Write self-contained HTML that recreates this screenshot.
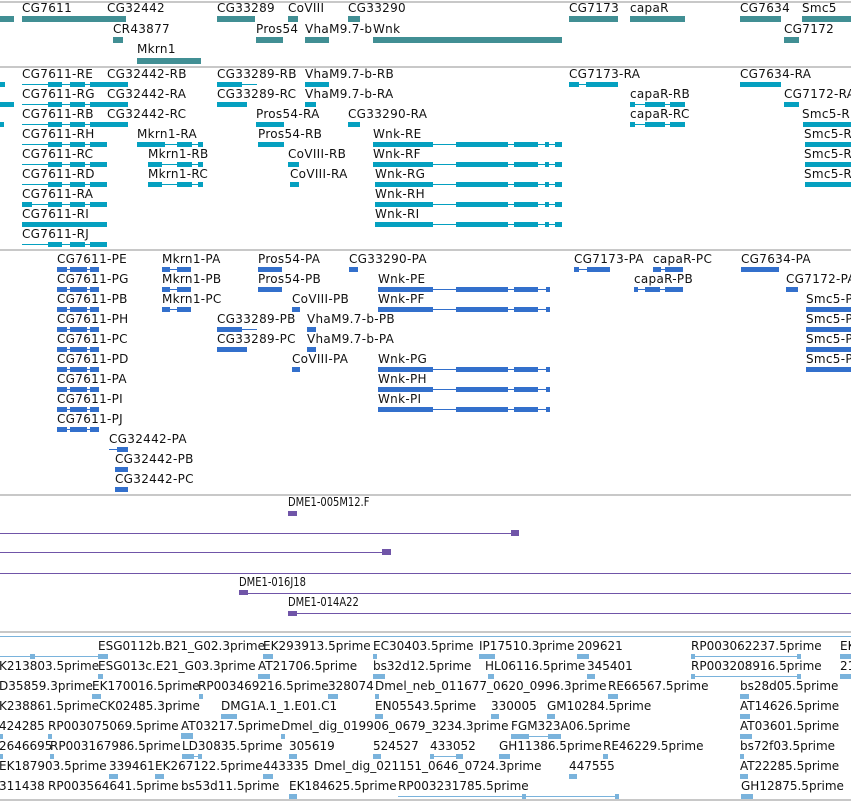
<!DOCTYPE html>
<html><head><meta charset="utf-8">
<style>
body{margin:0;width:851px;height:802px;overflow:hidden;background:#fff;position:relative;font-family:"DejaVu Sans","Liberation Sans",sans-serif}
.t{position:absolute;font-size:12px;line-height:14px;white-space:nowrap;color:#111;letter-spacing:0.3px}
.z .t{letter-spacing:0}
.n{position:absolute;font-family:"DejaVu Sans Condensed","Liberation Sans Narrow","Liberation Sans",sans-serif;font-size:12px;line-height:14px;color:#111;white-space:nowrap;transform:scaleX(0.92);transform-origin:left}
.b{position:absolute}
.s{position:absolute;left:0;width:851px;height:2px;background:#c8c8c8}
.a{background:#418f94}.c{background:#05a0c0}.d{background:#3370cc}.p{background:#7055a8}.e{background:#7ab3dc}
</style></head><body>
<div class="s" style="top:1px"></div>
<div class="s" style="top:66px"></div>
<div class="s" style="top:249px"></div>
<div class="s" style="top:494px"></div>
<div class="s" style="top:631px"></div>
<div class="b e" style="left:0;top:636px;width:851px;height:1px"></div>
<div class="s" style="top:799px"></div>

<!-- Track 1 -->
<div class="t" style="left:22px;top:1px">CG7611</div>
<div class="t" style="left:107px;top:1px">CG32442</div>
<div class="t" style="left:217px;top:1px">CG33289</div>
<div class="t" style="left:288px;top:1px">CoVIII</div>
<div class="t" style="left:348px;top:1px">CG33290</div>
<div class="t" style="left:569px;top:1px">CG7173</div>
<div class="t" style="left:630px;top:1px">capaR</div>
<div class="t" style="left:740px;top:1px">CG7634</div>
<div class="t" style="left:802px;top:1px">Smc5</div>
<div class="b a" style="left:0;top:16px;width:14px;height:6px"></div>
<div class="b a" style="left:22px;top:16px;width:85px;height:6px"></div>
<div class="b a" style="left:107px;top:16px;width:19px;height:6px"></div>
<div class="b a" style="left:217px;top:16px;width:38px;height:6px"></div>
<div class="b a" style="left:288px;top:16px;width:10px;height:6px"></div>
<div class="b a" style="left:348px;top:16px;width:12px;height:6px"></div>
<div class="b a" style="left:569px;top:16px;width:49px;height:6px"></div>
<div class="b a" style="left:630px;top:16px;width:55px;height:6px"></div>
<div class="b a" style="left:740px;top:16px;width:41px;height:6px"></div>
<div class="b a" style="left:802px;top:16px;width:49px;height:6px"></div>
<div class="t" style="left:113px;top:22px">CR43877</div>
<div class="t" style="left:256px;top:22px">Pros54</div>
<div class="t" style="left:305px;top:22px">VhaM9.7-b</div>
<div class="t" style="left:373px;top:22px">Wnk</div>
<div class="t" style="left:784px;top:22px">CG7172</div>
<div class="b a" style="left:113px;top:37px;width:10px;height:6px"></div>
<div class="b a" style="left:256px;top:37px;width:27px;height:6px"></div>
<div class="b a" style="left:305px;top:37px;width:24px;height:6px"></div>
<div class="b a" style="left:373px;top:37px;width:189px;height:6px"></div>
<div class="b a" style="left:784px;top:37px;width:15px;height:6px"></div>
<div class="t" style="left:137px;top:42px">Mkrn1</div>
<div class="b a" style="left:137px;top:58px;width:64px;height:6px"></div>

<!-- Track 2 -->
<div class="t" style="left:22px;top:67px">CG7611-RE</div>
<div class="t" style="left:107px;top:67px">CG32442-RB</div>
<div class="t" style="left:217px;top:67px">CG33289-RB</div>
<div class="t" style="left:305px;top:67px">VhaM9.7-b-RB</div>
<div class="t" style="left:569px;top:67px">CG7173-RA</div>
<div class="t" style="left:740px;top:67px">CG7634-RA</div>
<div class="t" style="left:22px;top:87px">CG7611-RG</div>
<div class="t" style="left:107px;top:87px">CG32442-RA</div>
<div class="t" style="left:217px;top:87px">CG33289-RC</div>
<div class="t" style="left:305px;top:87px">VhaM9.7-b-RA</div>
<div class="t" style="left:630px;top:87px">capaR-RB</div>
<div class="t" style="left:784px;top:87px">CG7172-RA</div>
<div class="t" style="left:22px;top:107px">CG7611-RB</div>
<div class="t" style="left:107px;top:107px">CG32442-RC</div>
<div class="t" style="left:256px;top:107px">Pros54-RA</div>
<div class="t" style="left:348px;top:107px">CG33290-RA</div>
<div class="t" style="left:630px;top:107px">capaR-RC</div>
<div class="t" style="left:802px;top:107px">Smc5-RB</div>
<div class="t" style="left:22px;top:127px">CG7611-RH</div>
<div class="t" style="left:137px;top:127px">Mkrn1-RA</div>
<div class="t" style="left:258px;top:127px">Pros54-RB</div>
<div class="t" style="left:373px;top:127px">Wnk-RE</div>
<div class="t" style="left:804px;top:127px">Smc5-RC</div>
<div class="t" style="left:22px;top:147px">CG7611-RC</div>
<div class="t" style="left:148px;top:147px">Mkrn1-RB</div>
<div class="t" style="left:288px;top:147px">CoVIII-RB</div>
<div class="t" style="left:373px;top:147px">Wnk-RF</div>
<div class="t" style="left:804px;top:147px">Smc5-RD</div>
<div class="t" style="left:22px;top:167px">CG7611-RD</div>
<div class="t" style="left:148px;top:167px">Mkrn1-RC</div>
<div class="t" style="left:290px;top:167px">CoVIII-RA</div>
<div class="t" style="left:375px;top:167px">Wnk-RG</div>
<div class="t" style="left:804px;top:167px">Smc5-RA</div>
<div class="t" style="left:22px;top:187px">CG7611-RA</div>
<div class="t" style="left:375px;top:187px">Wnk-RH</div>
<div class="t" style="left:22px;top:207px">CG7611-RI</div>
<div class="t" style="left:375px;top:207px">Wnk-RI</div>
<div class="t" style="left:22px;top:227px">CG7611-RJ</div>

<div class="b c" style="left:22px;top:84px;width:85px;height:1px"></div><div class="b c" style="left:48px;top:82px;width:14px;height:5px"></div><div class="b c" style="left:70px;top:82px;width:15px;height:5px"></div><div class="b c" style="left:90px;top:82px;width:17px;height:5px"></div>
<div class="b c" style="left:22px;top:104px;width:85px;height:1px"></div><div class="b c" style="left:48px;top:102px;width:14px;height:5px"></div><div class="b c" style="left:70px;top:102px;width:15px;height:5px"></div><div class="b c" style="left:90px;top:102px;width:17px;height:5px"></div>
<div class="b c" style="left:22px;top:124px;width:85px;height:1px"></div><div class="b c" style="left:48px;top:122px;width:14px;height:5px"></div><div class="b c" style="left:70px;top:122px;width:15px;height:5px"></div><div class="b c" style="left:90px;top:122px;width:17px;height:5px"></div>
<div class="b c" style="left:22px;top:144px;width:85px;height:1px"></div><div class="b c" style="left:48px;top:142px;width:14px;height:5px"></div><div class="b c" style="left:70px;top:142px;width:15px;height:5px"></div><div class="b c" style="left:90px;top:142px;width:17px;height:5px"></div>
<div class="b c" style="left:22px;top:164px;width:85px;height:1px"></div><div class="b c" style="left:48px;top:162px;width:14px;height:5px"></div><div class="b c" style="left:70px;top:162px;width:15px;height:5px"></div><div class="b c" style="left:90px;top:162px;width:17px;height:5px"></div>
<div class="b c" style="left:22px;top:184px;width:85px;height:1px"></div><div class="b c" style="left:48px;top:182px;width:14px;height:5px"></div><div class="b c" style="left:70px;top:182px;width:15px;height:5px"></div><div class="b c" style="left:90px;top:182px;width:17px;height:5px"></div>
<div class="b c" style="left:22px;top:204px;width:85px;height:1px"></div><div class="b c" style="left:22px;top:202px;width:10px;height:5px"></div><div class="b c" style="left:48px;top:202px;width:14px;height:5px"></div><div class="b c" style="left:70px;top:202px;width:15px;height:5px"></div><div class="b c" style="left:90px;top:202px;width:17px;height:5px"></div>
<div class="b c" style="left:22px;top:222px;width:70px;height:5px"></div><div class="b c" style="left:90px;top:222px;width:17px;height:5px"></div>
<div class="b c" style="left:22px;top:244px;width:85px;height:1px"></div><div class="b c" style="left:48px;top:242px;width:14px;height:5px"></div><div class="b c" style="left:70px;top:242px;width:15px;height:5px"></div><div class="b c" style="left:90px;top:242px;width:17px;height:5px"></div>
<div class="b c" style="left:0;top:82px;width:5px;height:5px"></div>
<div class="b c" style="left:0;top:102px;width:14px;height:5px"></div>
<div class="b c" style="left:0;top:122px;width:4px;height:5px"></div>
<div class="b c" style="left:107px;top:82px;width:21px;height:5px"></div>
<div class="b c" style="left:107px;top:102px;width:21px;height:5px"></div>
<div class="b c" style="left:107px;top:122px;width:21px;height:5px"></div>
<div class="b c" style="left:217px;top:84px;width:40px;height:1px"></div><div class="b c" style="left:217px;top:82px;width:25px;height:5px"></div>
<div class="b c" style="left:217px;top:102px;width:30px;height:5px"></div>
<div class="b c" style="left:305px;top:82px;width:24px;height:5px"></div>
<div class="b c" style="left:305px;top:102px;width:11px;height:5px"></div>
<div class="b c" style="left:256px;top:122px;width:28px;height:5px"></div>
<div class="b c" style="left:258px;top:142px;width:26px;height:5px"></div>
<div class="b c" style="left:348px;top:122px;width:12px;height:5px"></div>
<div class="b c" style="left:137px;top:144px;width:66px;height:1px"></div><div class="b c" style="left:137px;top:142px;width:28px;height:5px"></div><div class="b c" style="left:177px;top:142px;width:15px;height:5px"></div><div class="b c" style="left:198px;top:142px;width:5px;height:5px"></div>
<div class="b c" style="left:148px;top:164px;width:55px;height:1px"></div><div class="b c" style="left:148px;top:162px;width:14px;height:5px"></div><div class="b c" style="left:177px;top:162px;width:15px;height:5px"></div><div class="b c" style="left:198px;top:162px;width:5px;height:5px"></div>
<div class="b c" style="left:148px;top:184px;width:55px;height:1px"></div><div class="b c" style="left:148px;top:182px;width:14px;height:5px"></div><div class="b c" style="left:177px;top:182px;width:15px;height:5px"></div><div class="b c" style="left:198px;top:182px;width:5px;height:5px"></div>
<div class="b c" style="left:288px;top:162px;width:11px;height:5px"></div>
<div class="b c" style="left:290px;top:182px;width:9px;height:5px"></div>
<div class="b c" style="left:373px;top:144px;width:189px;height:1px"></div><div class="b c" style="left:373px;top:142px;width:60px;height:5px"></div><div class="b c" style="left:456px;top:142px;width:52px;height:5px"></div><div class="b c" style="left:514px;top:142px;width:24px;height:5px"></div><div class="b c" style="left:545px;top:142px;width:4px;height:5px"></div><div class="b c" style="left:555px;top:142px;width:7px;height:5px"></div>
<div class="b c" style="left:373px;top:164px;width:189px;height:1px"></div><div class="b c" style="left:373px;top:162px;width:60px;height:5px"></div><div class="b c" style="left:456px;top:162px;width:52px;height:5px"></div><div class="b c" style="left:514px;top:162px;width:24px;height:5px"></div><div class="b c" style="left:545px;top:162px;width:4px;height:5px"></div><div class="b c" style="left:555px;top:162px;width:7px;height:5px"></div>
<div class="b c" style="left:375px;top:184px;width:187px;height:1px"></div><div class="b c" style="left:375px;top:182px;width:58px;height:5px"></div><div class="b c" style="left:456px;top:182px;width:52px;height:5px"></div><div class="b c" style="left:514px;top:182px;width:24px;height:5px"></div><div class="b c" style="left:545px;top:182px;width:4px;height:5px"></div><div class="b c" style="left:555px;top:182px;width:7px;height:5px"></div>
<div class="b c" style="left:375px;top:204px;width:187px;height:1px"></div><div class="b c" style="left:375px;top:202px;width:58px;height:5px"></div><div class="b c" style="left:456px;top:202px;width:52px;height:5px"></div><div class="b c" style="left:514px;top:202px;width:24px;height:5px"></div><div class="b c" style="left:545px;top:202px;width:4px;height:5px"></div><div class="b c" style="left:555px;top:202px;width:7px;height:5px"></div>
<div class="b c" style="left:375px;top:224px;width:187px;height:1px"></div><div class="b c" style="left:375px;top:222px;width:58px;height:5px"></div><div class="b c" style="left:456px;top:222px;width:52px;height:5px"></div><div class="b c" style="left:514px;top:222px;width:24px;height:5px"></div><div class="b c" style="left:545px;top:222px;width:4px;height:5px"></div><div class="b c" style="left:555px;top:222px;width:7px;height:5px"></div>
<div class="b c" style="left:569px;top:84px;width:49px;height:1px"></div><div class="b c" style="left:569px;top:82px;width:10px;height:5px"></div><div class="b c" style="left:586px;top:82px;width:32px;height:5px"></div>
<div class="b c" style="left:630px;top:104px;width:55px;height:1px"></div><div class="b c" style="left:630px;top:102px;width:5px;height:5px"></div><div class="b c" style="left:645px;top:102px;width:20px;height:5px"></div><div class="b c" style="left:670px;top:102px;width:15px;height:5px"></div>
<div class="b c" style="left:630px;top:124px;width:55px;height:1px"></div><div class="b c" style="left:630px;top:122px;width:5px;height:5px"></div><div class="b c" style="left:645px;top:122px;width:20px;height:5px"></div><div class="b c" style="left:670px;top:122px;width:15px;height:5px"></div>
<div class="b c" style="left:740px;top:82px;width:41px;height:5px"></div>
<div class="b c" style="left:784px;top:102px;width:15px;height:5px"></div>
<div class="b c" style="left:803px;top:122px;width:48px;height:5px"></div>
<div class="b c" style="left:805px;top:142px;width:46px;height:5px"></div>
<div class="b c" style="left:805px;top:162px;width:46px;height:5px"></div>
<div class="b c" style="left:805px;top:182px;width:46px;height:5px"></div>

<!-- Track 3 -->
<div class="t" style="left:57px;top:252px">CG7611-PE</div>
<div class="t" style="left:162px;top:252px">Mkrn1-PA</div>
<div class="t" style="left:258px;top:252px">Pros54-PA</div>
<div class="t" style="left:349px;top:252px">CG33290-PA</div>
<div class="t" style="left:574px;top:252px">CG7173-PA</div>
<div class="t" style="left:653px;top:252px">capaR-PC</div>
<div class="t" style="left:741px;top:252px">CG7634-PA</div>
<div class="t" style="left:57px;top:272px">CG7611-PG</div>
<div class="t" style="left:162px;top:272px">Mkrn1-PB</div>
<div class="t" style="left:258px;top:272px">Pros54-PB</div>
<div class="t" style="left:378px;top:272px">Wnk-PE</div>
<div class="t" style="left:634px;top:272px">capaR-PB</div>
<div class="t" style="left:786px;top:272px">CG7172-PA</div>
<div class="t" style="left:57px;top:292px">CG7611-PB</div>
<div class="t" style="left:162px;top:292px">Mkrn1-PC</div>
<div class="t" style="left:292px;top:292px">CoVIII-PB</div>
<div class="t" style="left:378px;top:292px">Wnk-PF</div>
<div class="t" style="left:806px;top:292px">Smc5-PA</div>
<div class="t" style="left:57px;top:312px">CG7611-PH</div>
<div class="t" style="left:217px;top:312px">CG33289-PB</div>
<div class="t" style="left:307px;top:312px">VhaM9.7-b-PB</div>
<div class="t" style="left:806px;top:312px">Smc5-PB</div>
<div class="t" style="left:57px;top:332px">CG7611-PC</div>
<div class="t" style="left:217px;top:332px">CG33289-PC</div>
<div class="t" style="left:307px;top:332px">VhaM9.7-b-PA</div>
<div class="t" style="left:806px;top:332px">Smc5-PC</div>
<div class="t" style="left:57px;top:352px">CG7611-PD</div>
<div class="t" style="left:292px;top:352px">CoVIII-PA</div>
<div class="t" style="left:378px;top:352px">Wnk-PG</div>
<div class="t" style="left:806px;top:352px">Smc5-PD</div>
<div class="t" style="left:57px;top:372px">CG7611-PA</div>
<div class="t" style="left:378px;top:372px">Wnk-PH</div>
<div class="t" style="left:57px;top:392px">CG7611-PI</div>
<div class="t" style="left:378px;top:392px">Wnk-PI</div>
<div class="t" style="left:57px;top:412px">CG7611-PJ</div>
<div class="t" style="left:109px;top:432px">CG32442-PA</div>
<div class="t" style="left:115px;top:452px">CG32442-PB</div>
<div class="t" style="left:115px;top:472px">CG32442-PC</div>

<div class="b d" style="left:57px;top:269px;width:42px;height:1px"></div><div class="b d" style="left:57px;top:267px;width:10px;height:5px"></div><div class="b d" style="left:70px;top:267px;width:17px;height:5px"></div><div class="b d" style="left:90px;top:267px;width:9px;height:5px"></div>
<div class="b d" style="left:57px;top:289px;width:42px;height:1px"></div><div class="b d" style="left:57px;top:287px;width:10px;height:5px"></div><div class="b d" style="left:70px;top:287px;width:17px;height:5px"></div><div class="b d" style="left:90px;top:287px;width:9px;height:5px"></div>
<div class="b d" style="left:57px;top:309px;width:42px;height:1px"></div><div class="b d" style="left:57px;top:307px;width:10px;height:5px"></div><div class="b d" style="left:70px;top:307px;width:17px;height:5px"></div><div class="b d" style="left:90px;top:307px;width:9px;height:5px"></div>
<div class="b d" style="left:57px;top:329px;width:42px;height:1px"></div><div class="b d" style="left:57px;top:327px;width:10px;height:5px"></div><div class="b d" style="left:70px;top:327px;width:17px;height:5px"></div><div class="b d" style="left:90px;top:327px;width:9px;height:5px"></div>
<div class="b d" style="left:57px;top:349px;width:42px;height:1px"></div><div class="b d" style="left:57px;top:347px;width:10px;height:5px"></div><div class="b d" style="left:70px;top:347px;width:17px;height:5px"></div><div class="b d" style="left:90px;top:347px;width:9px;height:5px"></div>
<div class="b d" style="left:57px;top:369px;width:42px;height:1px"></div><div class="b d" style="left:57px;top:367px;width:10px;height:5px"></div><div class="b d" style="left:70px;top:367px;width:17px;height:5px"></div><div class="b d" style="left:90px;top:367px;width:9px;height:5px"></div>
<div class="b d" style="left:57px;top:389px;width:42px;height:1px"></div><div class="b d" style="left:57px;top:387px;width:10px;height:5px"></div><div class="b d" style="left:70px;top:387px;width:17px;height:5px"></div><div class="b d" style="left:90px;top:387px;width:9px;height:5px"></div>
<div class="b d" style="left:57px;top:409px;width:42px;height:1px"></div><div class="b d" style="left:57px;top:407px;width:10px;height:5px"></div><div class="b d" style="left:70px;top:407px;width:17px;height:5px"></div><div class="b d" style="left:90px;top:407px;width:9px;height:5px"></div>
<div class="b d" style="left:57px;top:429px;width:42px;height:1px"></div><div class="b d" style="left:57px;top:427px;width:10px;height:5px"></div><div class="b d" style="left:70px;top:427px;width:17px;height:5px"></div><div class="b d" style="left:90px;top:427px;width:9px;height:5px"></div>
<div class="b d" style="left:109px;top:449px;width:19px;height:1px"></div><div class="b d" style="left:117px;top:447px;width:11px;height:5px"></div>
<div class="b d" style="left:115px;top:467px;width:13px;height:5px"></div>
<div class="b d" style="left:115px;top:487px;width:13px;height:5px"></div>
<div class="b d" style="left:162px;top:269px;width:29px;height:1px"></div><div class="b d" style="left:162px;top:267px;width:8px;height:5px"></div><div class="b d" style="left:177px;top:267px;width:14px;height:5px"></div>
<div class="b d" style="left:162px;top:289px;width:29px;height:1px"></div><div class="b d" style="left:162px;top:287px;width:8px;height:5px"></div><div class="b d" style="left:177px;top:287px;width:14px;height:5px"></div>
<div class="b d" style="left:162px;top:309px;width:29px;height:1px"></div><div class="b d" style="left:162px;top:307px;width:8px;height:5px"></div><div class="b d" style="left:177px;top:307px;width:14px;height:5px"></div>
<div class="b d" style="left:258px;top:267px;width:24px;height:5px"></div>
<div class="b d" style="left:258px;top:287px;width:24px;height:5px"></div>
<div class="b d" style="left:349px;top:267px;width:9px;height:5px"></div>
<div class="b d" style="left:292px;top:307px;width:8px;height:5px"></div>
<div class="b d" style="left:292px;top:367px;width:8px;height:5px"></div>
<div class="b d" style="left:217px;top:329px;width:40px;height:1px"></div><div class="b d" style="left:217px;top:327px;width:25px;height:5px"></div>
<div class="b d" style="left:217px;top:347px;width:30px;height:5px"></div>
<div class="b d" style="left:307px;top:327px;width:9px;height:5px"></div>
<div class="b d" style="left:307px;top:347px;width:9px;height:5px"></div>
<div class="b d" style="left:378px;top:289px;width:172px;height:1px"></div><div class="b d" style="left:378px;top:287px;width:55px;height:5px"></div><div class="b d" style="left:456px;top:287px;width:52px;height:5px"></div><div class="b d" style="left:514px;top:287px;width:24px;height:5px"></div><div class="b d" style="left:546px;top:287px;width:4px;height:5px"></div>
<div class="b d" style="left:378px;top:309px;width:172px;height:1px"></div><div class="b d" style="left:378px;top:307px;width:55px;height:5px"></div><div class="b d" style="left:456px;top:307px;width:52px;height:5px"></div><div class="b d" style="left:514px;top:307px;width:24px;height:5px"></div><div class="b d" style="left:546px;top:307px;width:4px;height:5px"></div>
<div class="b d" style="left:378px;top:369px;width:172px;height:1px"></div><div class="b d" style="left:378px;top:367px;width:55px;height:5px"></div><div class="b d" style="left:456px;top:367px;width:52px;height:5px"></div><div class="b d" style="left:514px;top:367px;width:24px;height:5px"></div><div class="b d" style="left:546px;top:367px;width:4px;height:5px"></div>
<div class="b d" style="left:378px;top:389px;width:172px;height:1px"></div><div class="b d" style="left:378px;top:387px;width:55px;height:5px"></div><div class="b d" style="left:456px;top:387px;width:52px;height:5px"></div><div class="b d" style="left:514px;top:387px;width:24px;height:5px"></div><div class="b d" style="left:546px;top:387px;width:4px;height:5px"></div>
<div class="b d" style="left:378px;top:409px;width:172px;height:1px"></div><div class="b d" style="left:378px;top:407px;width:55px;height:5px"></div><div class="b d" style="left:456px;top:407px;width:52px;height:5px"></div><div class="b d" style="left:514px;top:407px;width:24px;height:5px"></div><div class="b d" style="left:546px;top:407px;width:4px;height:5px"></div>
<div class="b d" style="left:574px;top:269px;width:36px;height:1px"></div><div class="b d" style="left:574px;top:267px;width:5px;height:5px"></div><div class="b d" style="left:587px;top:267px;width:23px;height:5px"></div>
<div class="b d" style="left:653px;top:269px;width:30px;height:1px"></div><div class="b d" style="left:653px;top:267px;width:8px;height:5px"></div><div class="b d" style="left:665px;top:267px;width:18px;height:5px"></div>
<div class="b d" style="left:634px;top:289px;width:49px;height:1px"></div><div class="b d" style="left:634px;top:287px;width:4px;height:5px"></div><div class="b d" style="left:645px;top:287px;width:15px;height:5px"></div><div class="b d" style="left:665px;top:287px;width:18px;height:5px"></div>
<div class="b d" style="left:741px;top:267px;width:38px;height:5px"></div>
<div class="b d" style="left:786px;top:287px;width:12px;height:5px"></div>
<div class="b d" style="left:806px;top:307px;width:45px;height:5px"></div>
<div class="b d" style="left:806px;top:327px;width:45px;height:5px"></div>
<div class="b d" style="left:806px;top:347px;width:45px;height:5px"></div>
<div class="b d" style="left:806px;top:367px;width:45px;height:5px"></div>

<!-- Track 4 -->
<div class="n" style="left:288px;top:495px">DME1-005M12.F</div>
<div class="b p" style="left:288px;top:511px;width:9px;height:5px"></div>
<div class="b p" style="left:0;top:533px;width:515px;height:1px"></div><div class="b p" style="left:511px;top:530px;width:8px;height:6px"></div>
<div class="b p" style="left:0;top:552px;width:388px;height:1px"></div><div class="b p" style="left:382px;top:549px;width:9px;height:6px"></div>
<div class="b p" style="left:0;top:573px;width:851px;height:1px"></div>
<div class="n" style="left:239px;top:575px">DME1-016J18</div>
<div class="b p" style="left:239px;top:593px;width:612px;height:1px"></div><div class="b p" style="left:239px;top:590px;width:9px;height:5px"></div>
<div class="n" style="left:288px;top:595px">DME1-014A22</div>
<div class="b p" style="left:288px;top:613px;width:563px;height:1px"></div><div class="b p" style="left:288px;top:611px;width:9px;height:5px"></div>

<!-- Track 5 -->
<div class="z">
<div class="t" style="left:98px;top:639px">ESG0112b.B21_G02.3prime</div>
<div class="t" style="left:263px;top:639px">EK293913.5prime</div>
<div class="t" style="left:373px;top:639px">EC30403.5prime</div>
<div class="t" style="left:479px;top:639px">IP17510.3prime</div>
<div class="t" style="left:577px;top:639px">209621</div>
<div class="t" style="left:691px;top:639px">RP003062237.5prime</div>
<div class="t" style="left:840px;top:639px">EK</div>
<div class="t" style="left:-1px;top:659px">K213803.5prime</div>
<div class="t" style="left:98px;top:659px">ESG013c.E21_G03.3prime</div>
<div class="t" style="left:258px;top:659px">AT21706.5prime</div>
<div class="t" style="left:373px;top:659px">bs32d12.5prime</div>
<div class="t" style="left:485px;top:659px">HL06116.5prime</div>
<div class="t" style="left:587px;top:659px">345401</div>
<div class="t" style="left:691px;top:659px">RP003208916.5prime</div>
<div class="t" style="left:840px;top:659px">21</div>
<div class="t" style="left:-1px;top:679px">D35859.3prime</div>
<div class="t" style="left:92px;top:679px">EK170016.5prime</div>
<div class="t" style="left:198px;top:679px">RP003469216.5prime</div>
<div class="t" style="left:328px;top:679px">328074</div>
<div class="t" style="left:375px;top:679px">Dmel_neb_011677_0620_0996.3prime</div>
<div class="t" style="left:608px;top:679px">RE66567.5prime</div>
<div class="t" style="left:740px;top:679px">bs28d05.5prime</div>
<div class="t" style="left:-1px;top:699px">K238861.5prime</div>
<div class="t" style="left:99px;top:699px">CK02485.3prime</div>
<div class="t" style="left:221px;top:699px">DMG1A.1_1.E01.C1</div>
<div class="t" style="left:375px;top:699px">EN05543.5prime</div>
<div class="t" style="left:491px;top:699px">330005</div>
<div class="t" style="left:547px;top:699px">GM10284.5prime</div>
<div class="t" style="left:740px;top:699px">AT14626.5prime</div>
<div class="t" style="left:-1px;top:719px">424285</div>
<div class="t" style="left:48px;top:719px">RP003075069.5prime</div>
<div class="t" style="left:181px;top:719px">AT03217.5prime</div>
<div class="t" style="left:281px;top:719px">Dmel_dig_019906_0679_3234.3prime</div>
<div class="t" style="left:511px;top:719px">FGM323A06.5prime</div>
<div class="t" style="left:740px;top:719px">AT03601.5prime</div>
<div class="t" style="left:-1px;top:739px">2646695</div>
<div class="t" style="left:50px;top:739px">RP003167986.5prime</div>
<div class="t" style="left:182px;top:739px">LD30835.5prime</div>
<div class="t" style="left:289px;top:739px">305619</div>
<div class="t" style="left:373px;top:739px">524527</div>
<div class="t" style="left:430px;top:739px">433052</div>
<div class="t" style="left:499px;top:739px">GH11386.5prime</div>
<div class="t" style="left:603px;top:739px">RE46229.5prime</div>
<div class="t" style="left:740px;top:739px">bs72f03.5prime</div>
<div class="t" style="left:-1px;top:759px">EK187903.5prime</div>
<div class="t" style="left:109px;top:759px">339461</div>
<div class="t" style="left:155px;top:759px">EK267122.5prime</div>
<div class="t" style="left:263px;top:759px">443335</div>
<div class="t" style="left:314px;top:759px">Dmel_dig_021151_0646_0724.3prime</div>
<div class="t" style="left:569px;top:759px">447555</div>
<div class="t" style="left:740px;top:759px">AT22285.5prime</div>
<div class="t" style="left:-1px;top:779px">311438</div>
<div class="t" style="left:48px;top:779px">RP003564641.5prime</div>
<div class="t" style="left:181px;top:779px">bs53d11.5prime</div>
<div class="t" style="left:289px;top:779px">EK184625.5prime</div>
<div class="t" style="left:398px;top:779px">RP003231785.5prime</div>
<div class="t" style="left:741px;top:779px">GH12875.5prime</div>
</div>
<div class="b e" style="left:0;top:656px;width:105px;height:1px"></div><div class="b e" style="left:30px;top:654px;width:5px;height:5px"></div><div class="b e" style="left:98px;top:654px;width:10px;height:5px"></div>
<div class="b e" style="left:263px;top:654px;width:10px;height:5px"></div>
<div class="b e" style="left:373px;top:654px;width:4px;height:5px"></div>
<div class="b e" style="left:479px;top:654px;width:16px;height:5px"></div>
<div class="b e" style="left:577px;top:654px;width:12px;height:5px"></div>
<div class="b e" style="left:691px;top:656px;width:110px;height:1px"></div><div class="b e" style="left:691px;top:654px;width:4px;height:5px"></div><div class="b e" style="left:797px;top:654px;width:4px;height:5px"></div>
<div class="b e" style="left:840px;top:654px;width:11px;height:5px"></div>
<div class="b e" style="left:98px;top:674px;width:5px;height:5px"></div>
<div class="b e" style="left:258px;top:674px;width:12px;height:5px"></div>
<div class="b e" style="left:373px;top:674px;width:12px;height:5px"></div>
<div class="b e" style="left:488px;top:674px;width:6px;height:5px"></div>
<div class="b e" style="left:587px;top:674px;width:8px;height:5px"></div>
<div class="b e" style="left:691px;top:676px;width:110px;height:1px"></div><div class="b e" style="left:691px;top:674px;width:4px;height:5px"></div><div class="b e" style="left:797px;top:674px;width:4px;height:5px"></div>
<div class="b e" style="left:840px;top:674px;width:11px;height:5px"></div>
<div class="b e" style="left:92px;top:694px;width:9px;height:5px"></div>
<div class="b e" style="left:199px;top:694px;width:4px;height:5px"></div>
<div class="b e" style="left:328px;top:694px;width:10px;height:5px"></div>
<div class="b e" style="left:375px;top:694px;width:4px;height:5px"></div>
<div class="b e" style="left:608px;top:694px;width:10px;height:5px"></div>
<div class="b e" style="left:740px;top:694px;width:9px;height:5px"></div>
<div class="b e" style="left:221px;top:714px;width:16px;height:5px"></div>
<div class="b e" style="left:375px;top:714px;width:8px;height:5px"></div>
<div class="b e" style="left:491px;top:714px;width:8px;height:5px"></div>
<div class="b e" style="left:547px;top:714px;width:8px;height:5px"></div>
<div class="b e" style="left:740px;top:714px;width:10px;height:5px"></div>
<div class="b e" style="left:0;top:734px;width:3px;height:5px"></div>
<div class="b e" style="left:48px;top:734px;width:4px;height:5px"></div>
<div class="b e" style="left:181px;top:733px;width:12px;height:6px"></div>
<div class="b e" style="left:281px;top:734px;width:4px;height:5px"></div>
<div class="b e" style="left:511px;top:736px;width:50px;height:1px"></div><div class="b e" style="left:511px;top:734px;width:18px;height:5px"></div><div class="b e" style="left:548px;top:734px;width:13px;height:5px"></div>
<div class="b e" style="left:740px;top:734px;width:12px;height:5px"></div>
<div class="b e" style="left:0;top:754px;width:3px;height:5px"></div>
<div class="b e" style="left:50px;top:754px;width:4px;height:5px"></div>
<div class="b e" style="left:182px;top:756px;width:20px;height:1px"></div><div class="b e" style="left:182px;top:754px;width:12px;height:5px"></div><div class="b e" style="left:198px;top:754px;width:4px;height:5px"></div>
<div class="b e" style="left:289px;top:754px;width:8px;height:5px"></div>
<div class="b e" style="left:373px;top:754px;width:8px;height:5px"></div>
<div class="b e" style="left:430px;top:756px;width:33px;height:1px"></div><div class="b e" style="left:430px;top:754px;width:4px;height:5px"></div><div class="b e" style="left:456px;top:754px;width:7px;height:5px"></div>
<div class="b e" style="left:499px;top:754px;width:11px;height:5px"></div>
<div class="b e" style="left:603px;top:754px;width:5px;height:5px"></div>
<div class="b e" style="left:740px;top:754px;width:4px;height:5px"></div>
<div class="b e" style="left:109px;top:774px;width:9px;height:5px"></div>
<div class="b e" style="left:155px;top:774px;width:9px;height:5px"></div>
<div class="b e" style="left:263px;top:774px;width:10px;height:5px"></div>
<div class="b e" style="left:569px;top:774px;width:8px;height:5px"></div>
<div class="b e" style="left:740px;top:774px;width:8px;height:5px"></div>
<div class="b e" style="left:289px;top:794px;width:8px;height:5px"></div>
<div class="b e" style="left:398px;top:796px;width:221px;height:1px"></div><div class="b e" style="left:522px;top:794px;width:4px;height:5px"></div><div class="b e" style="left:615px;top:794px;width:4px;height:5px"></div>
<div class="b e" style="left:741px;top:794px;width:12px;height:5px"></div>
</body></html>
